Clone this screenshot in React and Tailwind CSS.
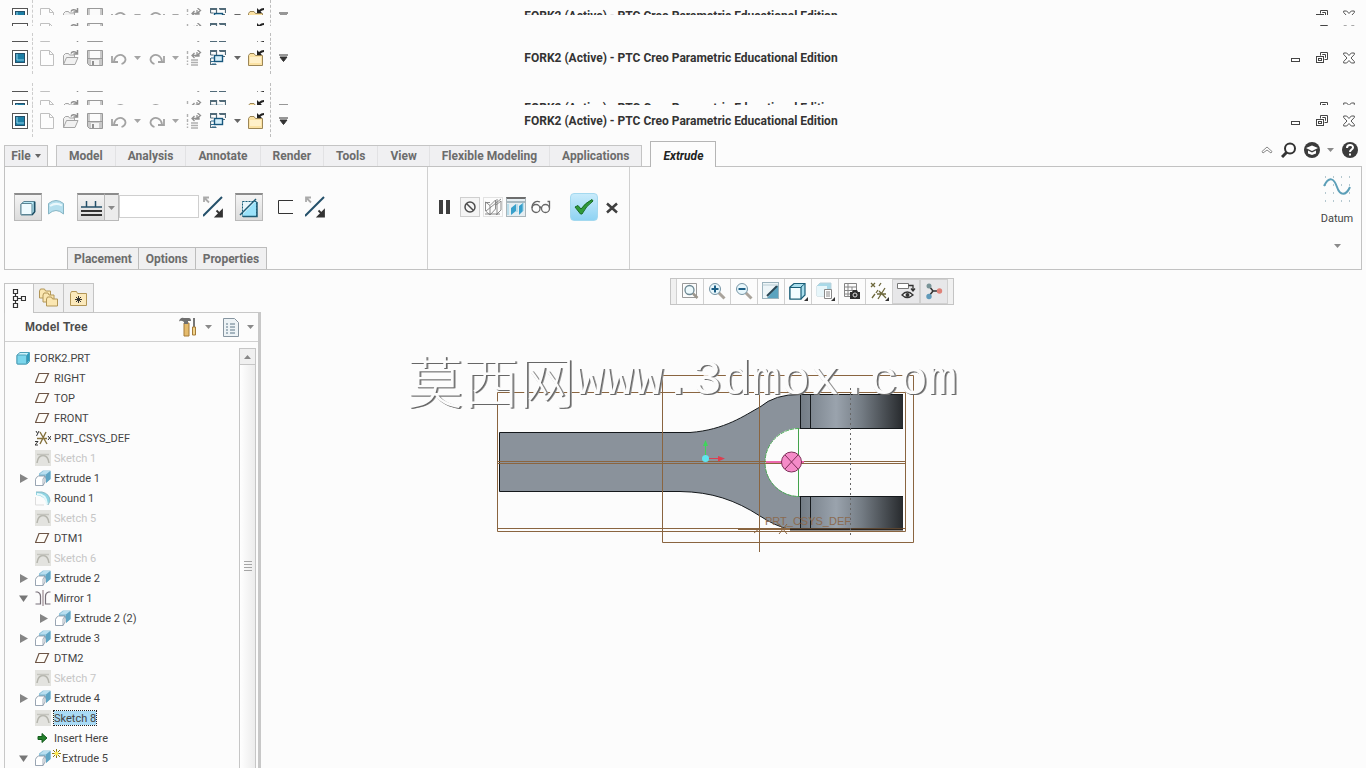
import React from "react";

const Svg = ({ w = 16, h = 16, children, className = "" }) => (
  <svg width={w} height={h} viewBox={`0 0 ${w} ${h}`} className={`block shrink-0 ${className}`} fill="none" aria-hidden="true">
    {children}
  </svg>
);

const Caret = ({ w = 7, color = "#8a8a8a" }) => (
  <Svg w={w} h={4}>
    <path d={`M0 0H${w}L${w / 2} 4Z`} fill={color} />
  </Svg>
);

/* ---------- title bar icons ---------- */
const AppIcon = () => (
  <Svg>
    <rect x="0.5" y="0.5" width="15" height="15" fill="#fff" stroke="#555" />
    <rect x="3.5" y="3.5" width="9" height="9" fill="#1d7fa5" stroke="#24506a" />
    <path d="M5 4v6h7" stroke="#8fd0e6" />
  </Svg>
);
const NewIcon = () => (
  <Svg>
    <path d="M1.500 0.500h9l4 4v11h-13z" fill="#fdfdfd" stroke="#c0c0c0" />
    <path d="M10.500 .5v4h4" stroke="#c0c0c0" />
  </Svg>
);
const OpenIcon = () => (
  <Svg>
    <path d="M0.500 14.500V5.500l2-2h3l1 1.500h5v2.500M.5 14.500l3-7h11.500l-3 7z" fill="#f1f1f1" stroke="#a5a5a5" />
    <path d="M8 3.500c1-2 4-2.500 6 0M14.500 0v4h-4" stroke="#8d8d8d" strokeWidth="1.500" />
  </Svg>
);
const SaveIcon = () => (
  <Svg>
    <path d="M0.500 0.500h15v15H2.500l-2-2z" fill="#c9c9c9" stroke="#999" />
    <rect x="3" y="1" width="10" height="7" fill="#fbfbfb" />
    <path d="M1 8.500h14" stroke="#999" />
    <rect x="4" y="10" width="8" height="5" fill="#f4f4f4" />
    <rect x="5" y="11" width="2" height="4" fill="#909090" />
  </Svg>
);
const UndoIcon = () => (
  <Svg>
    <path d="M3 11C4 5.500 9 3.500 12.500 6s2 7-2 8" stroke="#a3a3a3" strokeWidth="1.800" />
    <path d="M1 6v6h6" stroke="#a3a3a3" strokeWidth="1.800" />
  </Svg>
);
const RedoIcon = () => (
  <Svg>
    <path d="M13 11C12 5.500 7 3.500 3.500 6s-2 7 2 8" stroke="#a3a3a3" strokeWidth="1.800" />
    <path d="M15 6v6H9" stroke="#a3a3a3" strokeWidth="1.800" />
  </Svg>
);
const RegenIcon = () => (
  <Svg>
    <path d="M1.500 1v3M1.500 6v3M1.500 10.500v1.500M1.500 13.500V15M5 10h7M5 12.500h7M5 15h7" stroke="#b0b0b0" strokeWidth="1.400" />
    <path d="M6 5.500h5V2M13 3v3h-4M8.500 3L6 5.500 8.500 8M11.500 0l3 2.500-3 2.500" stroke="#909090" strokeWidth="1.300" />
  </Svg>
);
const WindowsIcon = () => (
  <Svg>
    <path d="M0.500 5V.5h6V5M9 .5h6.500V5M.5 8v6.500h6" stroke="#526b79" strokeWidth="1.200" />
    <path d="M1 1.500h5M9.500 1.500h6M.5 5h3M13 6.500h2" stroke="#526b79" />
    <rect x="4.500" y="5.500" width="8" height="6" fill="#d7f0fa" stroke="#17577d" strokeWidth="1.400" />
    <path d="M1 8h3M1 11.500h3M2 14h4" stroke="#2a6d92" />
  </Svg>
);
const FolderCloseIcon = () => (
  <Svg>
    <path d="M.5 15.500V5.500l1.500-2h4l1.500 2h7v10z" fill="#fbe2a4" stroke="#9c8656" />
    <path d="M2 7h11v6H2z" fill="#fff0c9" />
    <path d="M9 0v5h5l-1.500-1.500Q14 2 16 2V0q-3 0-5 2z" fill="#222" />
  </Svg>
);

const WinMin = () => (
  <Svg w={9} h={5}><rect x="0.5" y="0.5" width="8" height="3" fill="#fff" stroke="#444" /></Svg>
);
const WinRestore = () => (
  <Svg w={12} h={12}>
    <path d="M4.500 3.500v-3h7v7h-3" fill="#fff" stroke="#444" />
    <path d="M6.500 3v-.5h3v3H9" stroke="#444" />
    <rect x="0.500" y="4.500" width="7" height="6" fill="#fff" stroke="#444" />
    <rect x="2.500" y="6.500" width="3" height="2" stroke="#444" />
  </Svg>
);
const WinClose = () => (
  <Svg w={12} h={12}>
    <path d="M.7 1h3L6 3.500 8.300 1h3v1.500L8 6l3.300 3.500V11h-3L6 8.500 3.700 11h-3V9.500L4 6 .7 2.500z" fill="#fff" stroke="#555" />
  </Svg>
);

const ToolBtn = ({ label, w = "w-6", children }) => (
  <button type="button" aria-label={label} className={`${w} flex h-4 shrink-0 items-center justify-center`}>{children}</button>
);

function TitleBar({ height, gap = "", title = true }) {
  return (
    <div className={`${height} ${gap} shrink-0 overflow-hidden`}>
      <div className="grid h-8 grid-cols-[1fr_auto_1fr] items-center">
        <div className="flex h-8 items-center pl-3">
          <AppIcon />
          <span className="ml-1 h-8 border-l border-dashed border-[#cdcdcd]" />
          <span className="w-0.5" />
          <ToolBtn label="New"><NewIcon /></ToolBtn>
          <ToolBtn label="Open"><OpenIcon /></ToolBtn>
          <ToolBtn label="Save"><SaveIcon /></ToolBtn>
          <ToolBtn label="Undo"><UndoIcon /></ToolBtn>
          <ToolBtn label="Undo list" w="w-3"><Caret color="#a5a5a5" /></ToolBtn>
          <ToolBtn label="Redo" w="w-7"><RedoIcon /></ToolBtn>
          <ToolBtn label="Redo list" w="w-2"><Caret color="#a5a5a5" /></ToolBtn>
          <span className="w-[3px]" />
          <ToolBtn label="Regenerate"><RegenIcon /></ToolBtn>
          <ToolBtn label="Windows"><WindowsIcon /></ToolBtn>
          <ToolBtn label="Window list" w="w-[15px]"><Caret color="#666" /></ToolBtn>
          <ToolBtn label="Close window" w="w-[22px]"><FolderCloseIcon /></ToolBtn>
          <span className="ml-[3px] h-8 border-l border-dashed border-[#bdbdbd]" />
          <ToolBtn label="Customize">
            <Svg w={9} h={8}><path d="M0 1h9M1 3h7L4.500 7.500z" fill="#333" stroke="#333" strokeWidth="1" /></Svg>
          </ToolBtn>
        </div>
        <div className="whitespace-nowrap pr-1 font-['Roboto',sans-serif] text-[12px] font-bold leading-4 text-[#333]">
          {title ? "FORK2 (Active) - PTC Creo Parametric Educational Edition" : null}
        </div>
        <div className="flex items-center justify-end pr-[3px]">
          <ToolBtn label="Minimize" w="w-7"><span className="pt-1"><WinMin /></span></ToolBtn>
          <ToolBtn label="Restore" w="w-[26px]"><WinRestore /></ToolBtn>
          <ToolBtn label="Close" w="w-7"><WinClose /></ToolBtn>
        </div>
      </div>
    </div>
  );
}

/* ---------- ribbon ---------- */
const FlipIcon = () => (
  <Svg w={20} h={22}>
    <path d="M0 20L19 1" stroke="#24506a" strokeWidth="2" />
    <path d="M1 6V1.500h5M1.500 2l4.500 4.500" stroke="#aaa" strokeWidth="1.800" />
    <path d="M19 14.500v6h-6zM13.500 14.500l4 4" fill="#333" stroke="#333" strokeWidth="1.800" />
  </Svg>
);

const pressed = "flex h-7 w-7 items-center justify-center border border-t-2 border-[#b9b9b9] border-t-[#8c8c8c] bg-gradient-to-b from-[#f4f4f4] to-[#dcdcdc]";

function RibbonTabs() {
  const tabs = ["Model", "Analysis", "Annotate", "Render", "Tools", "View", "Flexible Modeling", "Applications"];
  return (
    <div className="flex h-[25px] shrink-0 items-end pl-1 font-['Roboto',sans-serif] text-[12px] font-bold text-[#6c6c6c]">
      <button type="button" className="flex h-[21px] w-11 items-center justify-center gap-1 border border-b-0 border-[#c4c4c4] bg-[#f0f0f2]">
        File <Caret w={6} color="#666" />
      </button>
      <nav className="ml-2 flex h-[21px] border border-b-0 border-[#c4c4c4] bg-[#f0f0f2]">
        {tabs.map((t, i) => (
          <button key={t} type="button" className={`px-3 ${i ? "border-l border-[#e2e2e4]" : ""}`}>{t}</button>
        ))}
      </nav>
      <button type="button" className="relative z-10 -mb-px ml-2 h-[26px] border border-b-0 border-[#b5b5b5] bg-[#fcfcfc] px-3 pt-0.5 italic text-[#222]">Extrude</button>
      <div className="ml-auto flex h-[25px] items-center pb-2 pr-2">
        <button type="button" aria-label="Collapse ribbon" className="mr-2"><Svg w={12} h={8}><path d="M6 1l5 4.500-1 1.500-4-3-4 3-1-1.500z" fill="#fff" stroke="#888" /></Svg></button>
        <button type="button" aria-label="Search" className="mr-[7px]"><Svg><circle cx="9" cy="6.500" r="5" fill="#fff" stroke="#333" strokeWidth="2" /><path d="M5.500 10.500L1 15" stroke="#333" strokeWidth="3" /></Svg></button>
        <button type="button" aria-label="Learning" className="mr-[7px]"><Svg><circle cx="8" cy="8" r="8" fill="#3b3b3b" /><path d="M8 3.500l6 2.500-6 3-6-3zM4 8.500v3l4 1.500 4-1.500v-3L8 10.500z" fill="#fff" /></Svg></button>
        <button type="button" aria-label="Learning list" className="mr-2"><Caret /></button>
        <button type="button" aria-label="Help"><Svg><circle cx="8" cy="8" r="8" fill="#3b3b3b" /><path d="M5 6c0-4 6-4 6-.5C11 7.500 8 7.500 8 10M8 11.500v2" stroke="#fff" strokeWidth="2" /></Svg></button>
      </div>
    </div>
  );
}

function Ribbon() {
  return (
    <section className="ml-1 mr-1 flex h-[104px] shrink-0 border border-[#c2c2c2]">
      <div className="flex w-[423px] flex-col border-r border-[#d0d0d0]">
        <div className="flex flex-1 items-center pl-[9px]">
          <button type="button" aria-label="Solid" className={pressed}>
            <Svg><path d="M1 4l3-2.500h11V12l-3 3H1z" fill="#b8eaf7" stroke="#5b8595" /><rect x="1" y="3.500" width="11" height="11" rx="1" fill="#eefbff" stroke="#5b8595" /><path d="M14.500 2v10l-2.500 3" stroke="#1f5066" strokeWidth="1.500" /></Svg>
          </button>
          <button type="button" aria-label="Surface" className="ml-1.5">
            <Svg w={16} h={16}><path d="M.5 4.500Q8-1.500 15.500 4.500V15Q8 8 .5 15z" fill="#b5dfee" stroke="#87b5c4" /><path d="M2 7q6-4 12-.5" stroke="#eaf8fc" strokeWidth="2" /></Svg>
          </button>
          <div className="ml-[13px] flex">
            <button type="button" aria-label="Depth" className={pressed}>
              <Svg w={21} h={18}><path d="M5.500 2v6M14.500 2v6M0 8h21" stroke="#24506a" strokeWidth="1.500" /><path d="M0 12h21M0 16h21" stroke="#333" strokeWidth="2" /></Svg>
            </button>
            <button type="button" aria-label="Depth options" className="flex h-7 w-3.5 items-center justify-center border border-l-0 border-t-2 border-[#b9b9b9] border-t-[#8c8c8c] bg-[#ececec]"><Caret /></button>
            <input aria-label="Depth value" className="mt-0.5 h-[23px] w-20 border border-[#cfcfcf] bg-white px-1 text-[12px]" />
          </div>
          <button type="button" aria-label="Flip depth" className="ml-1"><FlipIcon /></button>
          <button type="button" aria-label="Remove material" className={`ml-3 ${pressed}`}>
            <Svg w={20} h={20}><rect x="3.500" y="3.500" width="14" height="15" fill="#9ae2fa" stroke="#1f5c75" strokeDasharray="2 1" /><path d="M4 4h12L4 16z" fill="#e8f5fa" /><path d="M1 17L17 1M18 4v14.500H4" stroke="#1f5c75" strokeWidth="1.500" /></Svg>
          </button>
          <button type="button" aria-label="Thicken" className="ml-3.5"><Svg w={16} h={16}><path d="M16 1.500H1.500v13H16" stroke="#333" /></Svg></button>
          <button type="button" aria-label="Flip side" className="ml-3"><FlipIcon /></button>
        </div>
        <div className="ml-[62px] flex h-[22px] self-start border border-b-0 border-[#bcbcbc] bg-[#f0f0f1] font-['Roboto',sans-serif] text-[12px] font-bold text-[#6c6c6c]">
          <button type="button" className="px-1.5">Placement</button>
          <button type="button" className="border-l border-[#bcbcbc] px-[7px]">Options</button>
          <button type="button" className="border-l border-[#bcbcbc] px-[7px]">Properties</button>
        </div>
      </div>
      <div className="flex w-[202px] items-start border-r border-[#d0d0d0] pl-2.5 pt-[26px]">
        <div className="flex h-7 items-center">
          <button type="button" aria-label="Pause" className="mr-[9px]"><Svg w={13} h={14}><path d="M1 0h4v14H1zM8 0h4v14H8z" fill="#3e3e3e" /></Svg></button>
          <button type="button" aria-label="No preview" className="mr-[3px] flex h-5 w-5 items-center justify-center border border-[#cfcfcf] bg-[#f5f5f5]"><Svg w={12} h={12}><circle cx="6" cy="6" r="5" stroke="#4d4d4d" strokeWidth="1.500" /><path d="M2.500 2.500l7 7" stroke="#4d4d4d" strokeWidth="1.500" /></Svg></button>
          <button type="button" aria-label="Unattached preview" className="mr-[3px] flex h-5 w-5 items-center justify-center border border-[#e2e2e2]"><Svg w={18} h={18}><path d="M1 4.500h5M1.500 4v9l4.500 4V7.500L1.500 4M6 7.500L11.500 2v9L6 17M12 7l5-4v9l-5 5M2 13L17 1M13 1v16M1 16h15" stroke="#808080" strokeWidth=".9" /></Svg></button>
          <button type="button" aria-label="Attached preview" className="mr-[5px] flex h-5 w-5 items-center justify-center border border-t-2 border-[#a9b4b9] border-t-[#6d6d6d] bg-[#e5eef2]"><Svg w={18} h={16}><path d="M0 2h18" stroke="#a8bac2" strokeWidth="2" /><path d="M4 8l5-4v7l-5 4zM12 6l4-3v8l-4 4z" fill="#38a0cb" /><path d="M1 4v11M10 4v8M16 3v8" stroke="#8ccbe2" /></Svg></button>
          <button type="button" aria-label="Verify" className="mr-[19px]"><Svg w={20} h={14}><circle cx="5" cy="8.500" r="4" stroke="#666" strokeWidth="1.300" /><circle cx="14.500" cy="8.500" r="4" stroke="#666" strokeWidth="1.300" /><path d="M1 8C1 3 5 0 9 2M10 8q-.5-2-1 0M18.500 8V1.500h-2" stroke="#666" strokeWidth="1.300" /></Svg></button>
          <button type="button" aria-label="Accept" className="mr-2 flex h-7 w-7 items-center justify-center rounded-sm border border-[#a4d9ef] bg-gradient-to-b from-[#c8ebfb] to-[#8fd3f3]"><Svg w={20} h={16}><path d="M1 8l3-1.500 3 3.500Q11 4 18 .5L19 2Q12 7 8 15H6.500z" fill="#2f9a38" stroke="#176b25" /></Svg></button>
          <button type="button" aria-label="Cancel" className="pt-0.5"><Svg w={12} h={12}><path d="M1 1.500l10 9M11 1.500l-10 9" stroke="#3f3f3f" strokeWidth="2.500" /></Svg></button>
        </div>
      </div>
      <button type="button" className="ml-auto mr-1.5 flex w-9 flex-col items-center pt-2 font-['Roboto',sans-serif] text-[11px] text-[#444]">
        <Svg w={28} h={28}>
          <path d="M2 2h25M2 10h25M2 18h25M2 26h25" stroke="#6c93a2" strokeDasharray="1 7" />
          <path d="M1 11C6 1 11 3 14 12s9 9 13 0" stroke="#5c9fb8" strokeWidth="2" />
        </Svg>
        <span className="mt-2 leading-4">Datum</span>
        <span className="mt-[17px]"><Caret /></span>
      </button>
    </section>
  );
}

/* ---------- tree ---------- */
const PlaneIcon = () => <Svg><path d="M4 3.500h9.500L9.500 12.500H.5z" fill="#fffdf8" stroke="#6d5546" strokeWidth="1.200" /></Svg>;
const PartIcon = () => (
  <Svg><path d="M2 5l3-2.500h9.500v9L12 14H2z" fill="#cdf3fb" stroke="#4ea0b8" /><path d="M11.500 5L14 2.500V11l-2.500 3z" fill="#2f9cbd" /><rect x="2" y="5" width="9.500" height="9" rx="1" fill="#7bd6ec" stroke="#4ea0b8" /></Svg>
);
const ExtrudeIcon = () => (
  <Svg>
    <path d="M4 3.500L8 .5h7.500V9L11 13V7H4z" fill="#8cc3da" />
    <path d="M4.500 4.500L8.500 1H15l-4 3.500z" fill="#b9dff0" />
    <path d="M11 4.500L15.500 1V9L11 13z" fill="#5ea5c4" />
    <path d="M4 4.500h7v4H4z" fill="#8cc3da" />
    <path d="M.5 9.500q.5-2.500 3-3.500H10v6l-2 3.500H.5z" fill="#fff" stroke="#7f8ea0" strokeWidth=".8" />
    <path d="M8 9v6.500M8 9l2-3" stroke="#8c9aa8" strokeWidth=".8" />
  </Svg>
);
const RoundIcon = () => (
  <Svg><path d="M1 2h6q8 2 8 9l-3 4Q11 6 1 5z" fill="#8fd5e3" /><path d="M2 4q9 0 10 10" stroke="#e5f8fb" strokeWidth="2" /><path d="M1 2h6q8 2 8 9l-2 4" stroke="#8ab9c6" /><path d="M.5 7v8H9" stroke="#ddd" /></Svg>
);
const SketchIcon = () => (
  <Svg><rect width="16" height="16" fill="#e3e3df" /><path d="M2 13Q3 5.500 8 5.500T14 13" stroke="#b5b5ad" strokeWidth="1.500" /><path d="M2 4.500h12" stroke="#c4c4be" strokeWidth="1.500" /></Svg>
);
const CsysIcon = () => (
  <Svg><path d="M2 8.500h10M5 2l7 12M11 2L5 14" stroke="#85723d" strokeWidth="1.400" /><path d="M1 1l1.500 2.500M4 1L1.500 6M0 11.500h3L0 15h3M13 6l3 4M16 6l-3 4" stroke="#333" /></Svg>
);
const MirrorIcon = () => (
  <Svg><path d="M8 0v16" stroke="#85727b" /><path d="M.5 2h2q3 1 3 4v8h-5M15.500 2h-2q-3 1-3 4v8h5" stroke="#776f78" strokeWidth="1.200" /></Svg>
);
const InsertIcon = () => <Svg><path d="M3 6.500h4V3.500L12 8l-5 4.500v-3H3z" fill="#24802a" stroke="#145c1e" /></Svg>;
const Spark = () => <Svg w={11} h={12} className="self-start"><path d="M5.500 1v9M1 5.500h9M2 2l7 7M9 2L2 9" stroke="#8b7a14" /><circle cx="5.500" cy="5.500" r="2" fill="#ffe94b" /></Svg>;

const icons = { part: PartIcon, plane: PlaneIcon, csys: CsysIcon, sketch: SketchIcon, ext: ExtrudeIcon, round: RoundIcon, mirror: MirrorIcon, insert: InsertIcon };

const rows = [
  ["RIGHT", "plane"], ["TOP", "plane"], ["FRONT", "plane"], ["PRT_CSYS_DEF", "csys"],
  ["Sketch 1", "sketch", "", "dim"], ["Extrude 1", "ext", "closed"], ["Round 1", "round"],
  ["Sketch 5", "sketch", "", "dim"], ["DTM1", "plane"], ["Sketch 6", "sketch", "", "dim"],
  ["Extrude 2", "ext", "closed"], ["Mirror 1", "mirror", "open"], ["Extrude 2 (2)", "ext", "closed", "child"],
  ["Extrude 3", "ext", "closed"], ["DTM2", "plane"], ["Sketch 7", "sketch", "", "dim"],
  ["Extrude 4", "ext", "closed"], ["Sketch 8", "sketch", "", "selected"], ["Insert Here", "insert"],
  ["Extrude 5", "ext", "open", "new"],
];

const Twisty = ({ state }) => (
  <button type="button" aria-label={state === "open" ? "Collapse" : "Expand"} className="w-4">
    <Svg w={9} h={9}>{state === "open" ? <path d="M0 1.500h9L4.500 8z" fill="#777" /> : <path d="M1 0l8 4.500L1 9z" fill="#858585" />}</Svg>
  </button>
);

function TreeRow({ row }) {
  const [name, icon, twisty, kind] = row;
  const Icon = icons[icon];
  return (
    <li className={`flex h-5 items-center ${kind === "child" ? "pl-[34px]" : "pl-3.5"}`}>
      {twisty ? <Twisty state={twisty} /> : <span className="w-4" />}
      <Icon />
      {kind === "new" ? <Spark /> : null}
      <span className={`pt-0.5 leading-3 ${kind === "new" ? "" : "ml-[3px]"} ${kind === "dim" ? "text-[#c6c6c6]" : ""} ${kind === "selected" ? "bg-[#a9dbf6] outline-1 outline-dotted outline-[#222]" : ""}`}>{name}</span>
    </li>
  );
}

const FolderSmall = ({ x, y }) => <path d={`M${x} ${y + 9}V${y + 2}l1-2h4l1 2h5v7z`} fill="#fbe7b2" stroke="#b29657" />;

function ModelTree() {
  return (
    <aside className="ml-1 flex w-[257px] shrink-0 flex-col pt-[13px]">
      <div className="relative z-10 -mb-px flex h-[30px] shrink-0">
        <button type="button" aria-label="Model Tree" className="flex w-[30px] items-center justify-center border border-b-0 border-[#c4c4c4] bg-[#fcfcfc]">
          <Svg w={14} h={20}><path d="M1.500 .5h4v4h-4zM1.500 7.500h4v4h-4zM1.500 14.500h4v4h-4zM9.500 7.500h4v4h-4zM3.500 4.500v3M3.500 11.500v3M5.500 9.500h4" stroke="#333" strokeWidth="1.200" /></Svg>
        </button>
        <button type="button" aria-label="Folder Browser" className="flex w-[30px] items-center justify-center border-y border-r border-[#c4c4c4] bg-[#f0f0f0]">
          <Svg w={20} h={20}><FolderSmall x={0.5} y={1} /><FolderSmall x={4} y={5} /><FolderSmall x={7.500} y={9} /></Svg>
        </button>
        <button type="button" aria-label="Favorites" className="flex w-[30px] items-center justify-center border-y border-r border-[#c4c4c4] bg-[#f0f0f0]">
          <Svg w={18} h={16}><path d="M.5 15.500v-12l1-2h5l1 2h9v12z" fill="#fbe9bb" stroke="#b29657" /><path d="M8.500 6v7M5 9.500h7M6 7l5 5M11 7l-5 5" stroke="#333" /></Svg>
        </button>
      </div>
      <div className="flex min-h-0 flex-1 flex-col border-l border-r-[3px] border-t border-[#c8c8c8]">
        <header className="flex h-[29px] shrink-0 items-center border-b border-[#d0d0d0] pl-5 pr-1 text-[12px] font-bold text-[#4c4c4c]">
          <h2>Model Tree</h2>
          <button type="button" aria-label="Tree settings" className="ml-auto mr-2">
            <Svg w={18} h={20}><path d="M5 6h5v13H5z" fill="#e5bb6c" stroke="#a57a37" /><path d="M0 4.500Q1 0 5 1h5q2 0 2 3H9v3H5V5Q2 3 0 4.500z" fill="#707070" /><path d="M15 1v9" stroke="#777" strokeWidth="2" /><path d="M13.500 10h3v8h-3z" fill="#f0d48c" stroke="#a57a37" /></Svg>
          </button>
          <button type="button" aria-label="Settings list" className="mr-[11px]"><Caret /></button>
          <button type="button" aria-label="Show" className="mr-2">
            <Svg w={16} h={19}><path d="M.5.5h11l4 4v14H.5z" fill="#edf3f6" stroke="#8795a0" /><path d="M3 6h2M7 6h5M3 9h2M7 9h5M3 12h2M7 12h5M3 15h2M7 15h5" stroke="#5d7687" /></Svg>
          </button>
          <button type="button" aria-label="Show list"><Caret /></button>
        </header>
        <div className="flex min-h-0 flex-1 overflow-hidden pt-1.5">
          <ul className="flex-1 overflow-hidden font-['Roboto',sans-serif] text-[11px] text-[#444]">
            <li className="flex h-5 items-center gap-[3px] pl-2.5"><PartIcon /><span className="pt-0.5 leading-3">FORK2.PRT</span></li>
            {rows.map((r) => <TreeRow key={r[0]} row={r} />)}
          </ul>
          <div className="mr-0.5 flex w-[17px] shrink-0 flex-col border-x border-[#c6c6c6] bg-gradient-to-r from-white to-[#ececec]">
            <button type="button" aria-label="Scroll up" className="flex h-[17px] items-center justify-center border-y border-[#c6c6c6] bg-[#f0f0f0]">
              <Svg w={7} h={4}><path d="M0 4h7L3.500 0z" fill="#888" /></Svg>
            </button>
            <div className="flex flex-1 items-center justify-center">
              <Svg w={8} h={11}><path d="M0 .5h8M0 3.500h8M0 6.500h8M0 9.500h8" stroke="#a5a5a5" /></Svg>
            </div>
          </div>
        </div>
      </div>
    </aside>
  );
}

/* ---------- graphics area ---------- */
const Lens = ({ sign }) => (
  <Svg w={18} h={18}><path d="M10.500 10.500l6 6" stroke="#a9a39b" strokeWidth="3" /><circle cx="7" cy="7" r="5.500" fill="#e8f7fc" stroke="#7795a5" /><path d={sign === "+" ? "M3.500 7h7M7 3.500v7" : "M3.500 7h7"} stroke="#1c5f86" strokeWidth="2" /></Svg>
);
const Corner = () => <path d="M20 16v4h-4z" fill="#333" />;
const viewTools = [
  ["Refit", <Svg w={18} h={18}><path d="M1.500 1.500h14v14h-14z" stroke="#999" /><circle cx="8.500" cy="8" r="4.500" fill="#edf9fc" stroke="#6c8792" strokeWidth="1.300" /><path d="M12 11.500l4.500 4.500" stroke="#9b958c" strokeWidth="2.500" /></Svg>],
  ["Zoom in", <Lens sign="+" />],
  ["Zoom out", <Lens sign="-" />],
  ["Repaint", <Svg w={17} h={17}><rect x=".5" y=".5" width="16" height="16" fill="#edf5f8" stroke="#9cb3bd" /><path d="M16 3v13H5z" fill="#5ba3bf" /><path d="M5 14L15 4" stroke="#294654" strokeWidth="2" /><path d="M.5 3h16" stroke="#b9ccd3" /></Svg>],
  ["Display style", <Svg w={20} h={20}><path d="M2 6l4-3.500h11V14l-4 4H2z" fill="#a8ddec" stroke="#1a5e77" strokeWidth="1.200" /><path d="M2 6.500h11V18H2z" fill="#f3fcff" stroke="#1a5e77" strokeWidth="1.200" /><path d="M13 6l4-3.500" stroke="#1a5e77" /><Corner /></Svg>],
  ["Saved orientations", <Svg w={20} h={20}><path d="M2 5l3-3h11v11l-3 2H2z" fill="#a9d9e8" stroke="#bad3dc" /><path d="M2 5h10v10H2z" fill="#e7f6fa" /><path d="M9.500 8.500h7v9h-7z" fill="#fff" stroke="#888" /><path d="M11 11h4M11 13h4M11 15h4" stroke="#888" /><Corner /></Svg>],
  ["View manager", <Svg w={18} h={18}><path d="M1.500 1.500h12v13h-12zM1 5h13M1 8.500h13M1 12h7M5 1v13M9 5v4" stroke="#858585" /><path d="M7 10h2l1-2h4l1 2h2v7H7z" fill="#2e2e2e" /><circle cx="12" cy="13" r="2" stroke="#ddd" /></Svg>],
  ["Datum display", <Svg w={20} h={20}><path d="M2 2l4 4M6 2L2 6M10 5l2-3M7 12l2-3M3 17l3-4M9 18l7-11M10 10l7 7M8 13h9" stroke="#6c673b" strokeWidth="1.300" /><Corner /></Svg>],
  ["Annotation display", <Svg w={20} h={20}><path d="M1.500 2.500h11v5h-11z" fill="#fff" stroke="#777" /><path d="M12.500 4.500H17V9M15 7.500l2 2.500 2-2.500" stroke="#333" strokeWidth="1.300" /><path d="M6 14q5-6 11 0-6 5-11 0z" fill="#fff" stroke="#333" strokeWidth="1.300" /><circle cx="11.500" cy="14" r="2" fill="#333" /></Svg>],
  ["Spin center", <Svg w={18} h={18}><path d="M4 4l4 5h6M8 9l-4 5" stroke="#333" strokeWidth="1.500" /><circle cx="4" cy="4" r="2.500" fill="#789397" /><circle cx="14.500" cy="9" r="2.700" fill="#df8178" /><circle cx="4" cy="14.500" r="2.700" fill="#609aba" /></Svg>],
];

function ForkModel() {
  return (
    <svg width="550" height="210" viewBox="411 350 550 210" fill="none" className="block" role="img" aria-label="Fork part">
      <defs>
        <linearGradient id="barrel" x1="800" x2="903" y1="0" y2="0" gradientUnits="userSpaceOnUse">
          <stop offset="0" stopColor="#727b84" />
          <stop offset=".35" stopColor="#9aa3ad" />
          <stop offset=".6" stopColor="#747c84" />
          <stop offset="1" stopColor="#272a2d" />
        </linearGradient>
      </defs>
      <path d="M499.500 432.500H690C725 430 745 415 760 407Q775 394 800 394.500H903V428H799A34 34 0 0 0 799 496H903V529.500H790Q775 526 760 516C735 500 712 492 680 491.500H499.500z" fill="#8a929b" />
      <path d="M800 394h103v34H800zM800 496h103v33.500H800z" fill="url(#barrel)" />
      <path d="M799.500 428.500H903M799.500 496.500H903M800.500 394v34M810.500 394v34M800.500 496v33M810.500 496v33" stroke="#15191c" />
      <path d="M903 394.500H800Q775 394 760 407C745 415 725 430 690 432.500H499.500V491.500H680C712 492 735 500 760 516Q775 526 790 529.500H903" stroke="#15191c" />
      <path d="M799 429A33.500 33.500 0 0 0 799 496z" fill="#fcfcfc" />
      <path d="M799 428.500A34 34 0 0 0 799 496.500" stroke="#4bad56" strokeDasharray="4 1" />
      <path d="M798.500 428v69" stroke="#43a34b" />
      <g stroke="#8a6540">
        <path d="M497.500 392.500h408v139h-408zM662.500 375.500h251v167h-251z" />
        <path d="M498 461.500h408M498 463.500h408M498 528.500h408M738 529.500h55M754 533l6-5M779 524l8 10M787 524l-8 10" />
        <path d="M759.500 375v177" />
      </g>
      <path d="M790 529.500h113" stroke="#2b241e" strokeWidth="2" />
      <path d="M850.500 388v150" stroke="#666" strokeDasharray="2 3" />
      <path d="M705.500 458v-14" stroke="#3fd45b" /><path d="M703 446l2.500-6 2.500 6z" fill="#3fd45b" />
      <path d="M705 458.500h15" stroke="#dc3e50" /><path d="M718 456l7 2.500-7 3z" fill="#dc3e50" />
      <circle cx="705.500" cy="458.500" r="3.500" fill="#5fe5ef" />
      <path d="M766 462h38" stroke="#ec6aae" strokeWidth="2" />
      <circle cx="791.500" cy="462" r="10" fill="#f58bc8" stroke="#7d2e58" />
      <path d="M785 455l13 14M798 455l-13 14" stroke="#7d2e58" />
      <text x="765" y="525" fill="#8b6b51" fontSize="11" fontFamily="Liberation Sans, sans-serif">PRT_CSYS_DEF</text>
    </svg>
  );
}

function Canvas() {
  return (
    <main className="min-w-0 flex-1 overflow-hidden pr-1 pt-2">
      <div className="mx-auto flex h-[27px] w-[284px] border border-[#c4c4c4] bg-[#f0f0f0] px-[5px]">
        {viewTools.map(([label, icon], i) => (
          <button key={label} type="button" aria-label={label} className={`flex flex-1 items-center justify-center border-l border-[#d0d0d0] pb-0.5 ${i > 7 ? "border border-[#aaa] bg-[#e7e7e9]" : "bg-[#fcfcfc]"}`}>{icon}</button>
        ))}
      </div>
      <div className="relative ml-[150px] mt-[45px] w-[550px]">
        <ForkModel />
        <div className="absolute -left-1 -top-1 flex items-center whitespace-nowrap leading-[62px] text-[#fcfcfc] will-change-transform [text-shadow:1px_1px_0_#666,2px_1px_0_#999]">
          <span className="font-['Noto_Sans_CJK_SC',sans-serif] text-[56px] font-light">莫西网</span>
          <span className="pt-1 font-['Liberation_Mono',monospace] text-[49px]">www.3dmox.com</span>
        </div>
      </div>
    </main>
  );
}

export default function App() {
  return (
    <div className="flex h-screen flex-col overflow-hidden bg-[#fcfcfc] font-['Liberation_Sans',Arial,sans-serif]">
      <TitleBar height="h-[15px]" />
      <TitleBar height="h-[11px]" title={false} />
      <TitleBar height="h-[9px]" gap="mt-[7px]" title={false} />
      <TitleBar height="h-[41px]" />
      <TitleBar height="h-[9px]" title={false} />
      <TitleBar height="h-[13px]" />
      <TitleBar height="h-9" />
      <RibbonTabs />
      <Ribbon />
      <div className="flex min-h-0 flex-1">
        <ModelTree />
        <Canvas />
      </div>
    </div>
  );
}
